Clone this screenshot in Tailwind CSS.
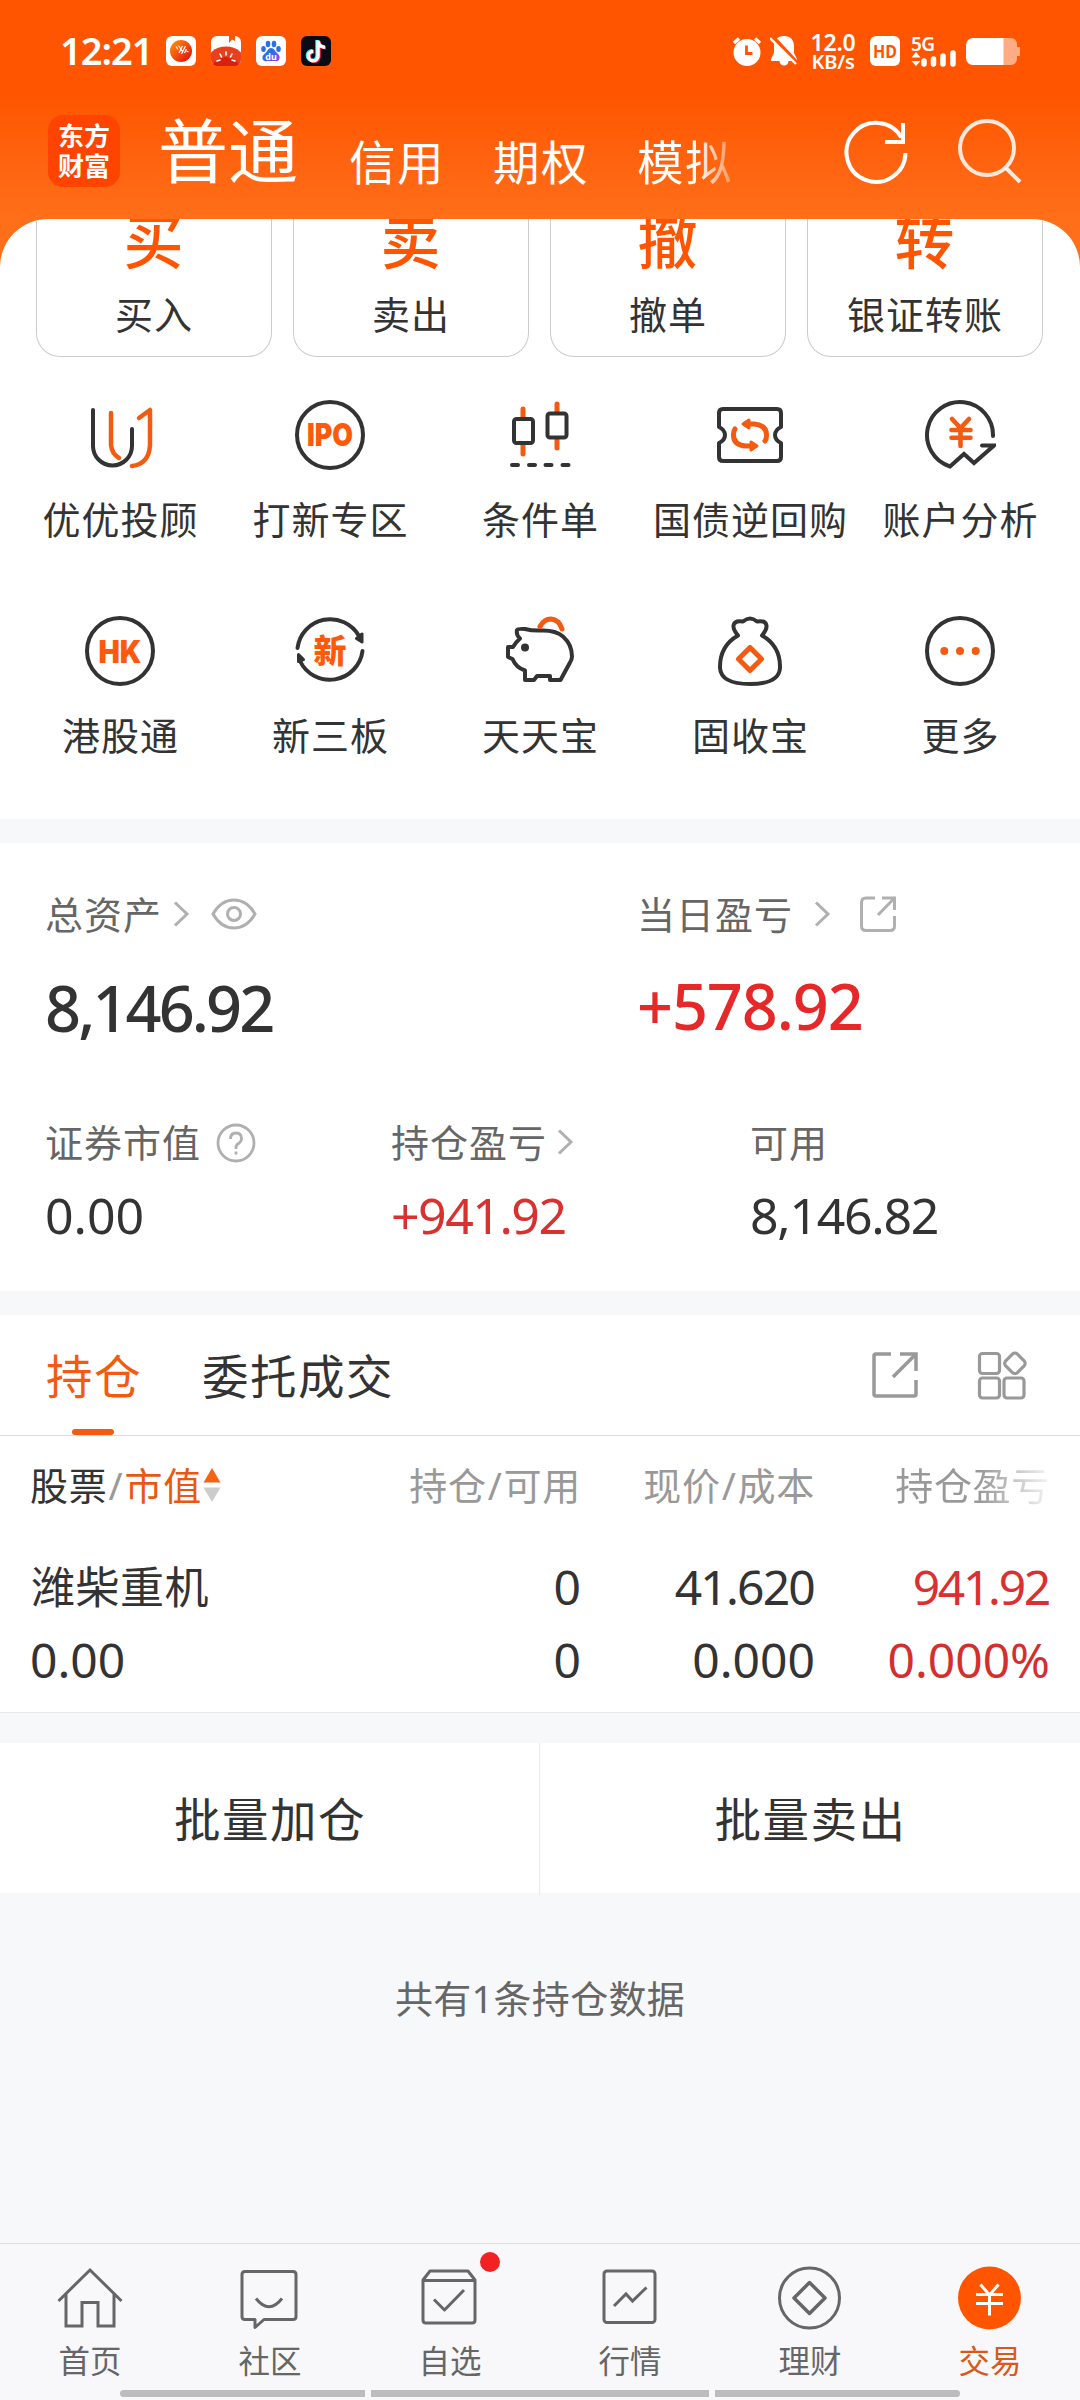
<!DOCTYPE html>
<html lang="zh-CN">
<head>
    <meta charset="UTF-8">
    <meta name="viewport" content="width=device-width, initial-scale=1.0">
    <title>东方财富 - 交易</title>
    <script src="https://cdn.jsdelivr.net/npm/@tailwindcss/browser@4"></script>
    <style>
        body {
            font-family: 'Noto Sans', 'Noto Sans CJK SC', sans-serif;
        }
    </style>
</head>
<body class="w-[1080px] h-[2400px] overflow-hidden bg-[#f7f8fa] text-[#333] flex flex-col">

    <!-- Header -->
    <header class="h-[270px] shrink-0 bg-linear-to-b from-[#ff5500] from-35% to-[#ff6e18] to-80% text-white">
        <!-- Status bar -->
        <div class="h-[102px] pl-[60px] pr-[60px] flex items-center justify-between">
            <div class="flex items-center">
                <span class="w-[106px] pb-[2px] text-[38px] leading-none font-semibold tracking-[-1px]">12:21</span>
                <div class="flex gap-[15px]">
                    <svg class="size-[30px]" viewBox="0 0 30 30">
                        <defs><linearGradient id="g1" x1="0" y1="0" x2="1" y2="1"><stop offset="0" stop-color="#f90"/><stop offset=".6" stop-color="#f04010"/><stop offset="1" stop-color="#d00"/></linearGradient></defs>
                        <rect width="30" height="30" rx="6" fill="#fff"/>
                        <circle cx="15" cy="15" r="11" fill="url(#g1)"/>
                        <path d="M10 10.500l2 3M12.500 9.500l4 6M13 17l3.500-7M15.500 18l4-8M18.500 17l2-4M20.500 15l2 1" stroke="#fff" stroke-width="1.200" fill="none"/>
                    </svg>
                    <svg class="size-[30px]" viewBox="0 0 30 30">
                        <defs><clipPath id="c1"><rect width="30" height="30" rx="6"/></clipPath></defs>
                        <g clip-path="url(#c1)">
                            <rect width="30" height="30" fill="#fff"/>
                            <path d="M18 0h6v5l-3-1.500L18 7z" fill="#ff5500"/>
                            <ellipse cx="15" cy="28" rx="20" ry="17.500" fill="#e8401c"/>
                            <ellipse cx="15" cy="31" rx="13" ry="10" fill="#d8200c"/>
                            <path d="M15 16v3M9 18l1.500 3M21 18l-1.500 3M6 25l3-1M24 25l-3-1" stroke="#fff" stroke-width="1.600" stroke-linecap="round"/>
                        </g>
                    </svg>
                    <svg class="size-[30px]" viewBox="0 0 30 30">
                        <defs><linearGradient id="g2" x1="0" y1="0" x2="1" y2="1"><stop offset=".4" stop-color="#2b70e8"/><stop offset="1" stop-color="#a040e0"/></linearGradient></defs>
                        <rect width="30" height="30" rx="6" fill="#fff"/>
                        <g fill="#2b70e8"><ellipse cx="7.500" cy="13" rx="2.300" ry="3"/><ellipse cx="12" cy="8" rx="2.300" ry="3.200"/><ellipse cx="18" cy="8" rx="2.300" ry="3.200"/><ellipse cx="22.500" cy="13" rx="2.300" ry="3"/></g>
                        <path d="M15 12c3 0 4 3 6 5s3 3 2.500 5.500S21 25.500 19 25H11c-2 .5-4 0-4.500-2.500S7.500 18.500 9.500 17s2.500-5 5.500-5z" fill="url(#g2)"/>
                        <text x="15" y="23.500" font-size="9" font-weight="700" fill="#fff" text-anchor="middle">du</text>
                    </svg>
                    <svg class="size-[30px]" viewBox="0 0 30 30">
                        <rect width="30" height="30" rx="6" fill="#0b0b16"/>
                        <g fill="none" stroke-width="3.400">
                            <path d="M17 4.500V20a4.800 4.800 0 1 1-4.800-4.800M17 5c.5 4 3 6 7 6.300" stroke="#25f4ee" transform="translate(-1 -.6)"/>
                            <path d="M17 4.500V20a4.800 4.800 0 1 1-4.800-4.800M17 5c.5 4 3 6 7 6.300" stroke="#fe2c55" transform="translate(1 .6)"/>
                            <path d="M17 4.500V20a4.800 4.800 0 1 1-4.800-4.800M17 5c.5 4 3 6 7 6.300" stroke="#fff"/>
                        </g>
                    </svg>
                </div>
            </div>
            <div class="flex items-center">
                <svg class="w-[30px] h-[30px]" viewBox="0 0 30 30">
                    <circle cx="15" cy="16.500" r="13.500" fill="#fff"/>
                    <path d="M2 7l5-4.500M28 7l-5-4.500" stroke="#fff" stroke-width="3.400"/>
                    <path d="M14.500 9.500v8h6" stroke="#ff5500" stroke-width="2.800" fill="none"/>
                </svg>
                <svg class="ml-[8px] w-[28px] h-[30px]" viewBox="0 0 28 30">
                    <path d="M14 0c6.500 0 10 4 10 10v7l3 6v2H18.500a4.500 4.500 0 0 1-9 0H1v-2l3-6v-7C4 4 7.500 0 14 0z" fill="#fff"/>
                    <path d="M2 0l26 28" stroke="#ff5500" stroke-width="4"/>
                    <path d="M0 2l26 26" stroke="#fff" stroke-width="2.400"/>
                </svg>
                <div class="ml-[11px] mr-[13px] w-[48px] text-[23px] leading-[20px] font-semibold tracking-[-0.200px] flex flex-col items-center">
                    <span>12.0</span><span class="text-[20px] leading-[19px]">KB/s</span>
                </div>
                <svg class="w-[30px] h-[30px]" viewBox="0 0 30 30">
                    <rect width="30" height="30" rx="6" fill="#fff"/>
                    <text x="15" y="21.500" font-size="18" font-weight="700" fill="#ff5500" text-anchor="middle" textLength="24" lengthAdjust="spacingAndGlyphs">HD</text>
                </svg>
                <svg class="ml-[11px] w-[46px] h-[31px]" viewBox="0 0 46 31">
                    <text x="0" y="14.500" font-size="19" font-weight="600" fill="#fff" textLength="24">5G</text>
                    <path d="M5 16l4.500 5.500H.5zM5 30l4.500-5H.5z" fill="#fff"/>
                    <path d="M13 25v3M22.500 23v5M32 20v8M42 17v11" stroke="#fff" stroke-width="5.500" stroke-linecap="round"/>
                </svg>
                <svg class="ml-[9px] w-[54px] h-[27px]" viewBox="0 0 54 27">
                    <path d="M37 0h8a6 6 0 0 1 6 6v3h3v9h-3v3a6 6 0 0 1-6 6h-8z" fill="#ffab84"/>
                    <path d="M37.500 0H7a7 7 0 0 0-7 7v13a7 7 0 0 0 7 7h30.500z" fill="#fff"/>
                </svg>
            </div>
        </div>
        <!-- Account tabs -->
        <div class="pl-[48px] pr-[58px] flex">
            <div class="mt-[13px] size-[72px] rounded-[15px] bg-[#ff4400] flex flex-col items-center justify-center text-[26px] leading-[30px] font-bold">
                <span>东方</span><span>财富</span>
            </div>
            <nav class="ml-[38px] pt-[1px] h-[100px] flex items-baseline whitespace-nowrap">
                <span class="w-[191px] text-[70px] leading-[96px]">普通</span>
                <span class="w-[144px] pt-[2px] text-[46.500px] tracking-[1.500px] translate-y-[2px]">信用</span>
                <span class="w-[144px] text-[46.500px] tracking-[1.500px] translate-y-[2px]">期权</span>
                <span class="text-[46.500px] tracking-[1.500px] translate-y-[2px] bg-linear-to-r from-white from-60% to-white/30 bg-clip-text text-transparent">模拟</span>
            </nav>
            <svg class="ml-auto mt-[17px] w-[66px] h-[66px]" viewBox="0 0 66 66" fill="none" stroke="#fff" stroke-width="4">
                <path d="M61.500 34a29.500 29.500 0 1 1-4-15.500"/>
                <path d="M59 4v19H41"/>
            </svg>
            <svg class="ml-[48px] mt-[17px] w-[64px] h-[66px]" viewBox="0 0 64 66" fill="none" stroke="#fff" stroke-opacity=".85" stroke-width="4">
                <circle cx="29" cy="29" r="27"/>
                <path d="M48 49l14 14"/>
            </svg>
        </div>
    </header>

    <!-- Shortcuts -->
    <section class="-mt-[51px] h-[600px] shrink-0 rounded-t-[48px] bg-white overflow-hidden">
        <div class="pl-[36px] pr-[37px] grid grid-cols-4 gap-[21px] text-center">
            <div class="h-[138px] border border-t-0 border-[#ccc] rounded-b-[24px]">
                <div class="-mt-[8px] mr-[1px] h-[60px] text-[60px] leading-[60px] font-medium text-[#ff5500]">买</div>
                <div class="mt-[18px] text-[38px] leading-[50px] tracking-[1px]">买入</div>
            </div>
            <div class="h-[138px] border border-t-0 border-[#ccc] rounded-b-[24px]">
                <div class="-mt-[8px] mr-[1px] h-[60px] text-[60px] leading-[60px] font-medium text-[#ff5500]">卖</div>
                <div class="mt-[18px] text-[38px] leading-[50px] tracking-[1px]">卖出</div>
            </div>
            <div class="h-[138px] border border-t-0 border-[#ccc] rounded-b-[24px]">
                <div class="-mt-[8px] mr-[1px] h-[60px] text-[60px] leading-[60px] font-medium text-[#ff5500]">撤</div>
                <div class="mt-[18px] text-[38px] leading-[50px] tracking-[1px]">撤单</div>
            </div>
            <div class="h-[138px] border border-t-0 border-[#ccc] rounded-b-[24px]">
                <div class="-mt-[8px] mr-[1px] h-[60px] text-[60px] leading-[60px] font-medium text-[#ff5500]">转</div>
                <div class="mt-[18px] text-[38px] leading-[50px] tracking-[1px]">银证转账</div>
            </div>
        </div>
        <div class="mt-[42px] px-[15px] grid grid-cols-5 auto-rows-[216px] text-[38px] leading-[50px] tracking-[1px] whitespace-nowrap">
            <div class="flex flex-col items-center gap-[23px]">
                <svg class="size-[72px]" viewBox="0 0 72 72" fill="none" stroke-width="4" stroke-linecap="round">
                    <path d="M9 11V47a19.500 19.500 0 0 0 39 0V30" stroke="#333"/>
                    <path d="M27 14V46q1 9 8 13M55 19l11-8V46q-1 19-18 21" stroke="#f45a10" stroke-width="4.500" stroke-linejoin="round"/>
                </svg>
                <span class="pl-[1px]">优优投顾</span>
            </div>
            <div class="flex flex-col items-center gap-[23px]">
                <svg class="size-[72px]" viewBox="0 0 72 72">
                    <circle cx="36" cy="36" r="33" fill="none" stroke="#333" stroke-width="4"/>
                    <text x="36" y="47" font-size="31" font-weight="900" fill="#ff5a0c" text-anchor="middle" textLength="46" lengthAdjust="spacingAndGlyphs" letter-spacing="0" font-family="Inter">IPO</text>
                </svg>
                <span class="pl-[1px]">打新专区</span>
            </div>
            <div class="flex flex-col items-center gap-[23px]">
                <svg class="size-[72px]" viewBox="0 0 72 72" fill="none" stroke-width="4" stroke-linecap="round">
                    <path d="M19 10v9M19 46v9M53 5v8M53 41v8" stroke="#f45a10" stroke-width="5"/>
                    <rect x="10" y="20" width="19" height="24" rx="2.500" stroke="#333"/>
                    <rect x="43.500" y="14.500" width="19" height="24" rx="2.500" stroke="#333"/>
                    <path d="M8 66h6M25 66h6M41.500 66h6M58.500 66h6" stroke="#333"/>
                </svg>
                <span class="pl-[1px]">条件单</span>
            </div>
            <div class="flex flex-col items-center gap-[23px]">
                <svg class="size-[72px]" viewBox="0 0 72 72" fill="none" stroke="#333" stroke-width="4" stroke-linejoin="round">
                    <path d="M9 10h54q4 0 4 4v14q-6 3-6 8t6 8v14q0 4-4 4H9q-4 0-4-4V44q6-3 6-8t-6-8V14q0-4 4-4z"/>
                    <g stroke="#f45a10" stroke-width="5" stroke-linecap="round">
                        <path d="M35 25h5q13 1 12.500 12 0 3-1.500 5M37 47h-5q-13-1-12.500-12 0-3 1.500-5"/>
                        <path d="M35 21v8l-6-4zM37 43v8l6-4z" fill="#f45a10" stroke-width="3"/>
                    </g>
                </svg>
                <span class="pl-[1px]">国债逆回购</span>
            </div>
            <div class="flex flex-col items-center gap-[23px]">
                <svg class="size-[72px]" viewBox="0 0 72 72" fill="none" stroke="#333" stroke-width="4" stroke-linecap="round">
                    <path d="M69 37A33 33 0 1 0 26 67.500L40 55l10 9 20-17.500H58"/>
                    <path d="M28 20l8.500 9 8.500-9M36.500 29v18M27.500 31h19M27.500 38.700h19" stroke="#f45a10" stroke-width="4.600"/>
                </svg>
                <span class="pl-[1px]">账户分析</span>
            </div>
            <div class="flex flex-col items-center gap-[23px]">
                <svg class="size-[72px]" viewBox="0 0 72 72">
                    <circle cx="36" cy="36" r="33" fill="none" stroke="#333" stroke-width="4"/>
                    <text x="36" y="47.500" font-size="32" font-weight="900" fill="#ff5a0c" text-anchor="middle" textLength="43" lengthAdjust="spacingAndGlyphs" letter-spacing="0" font-family="Inter">HK</text>
                </svg>
                <span class="pl-[1px]">港股通</span>
            </div>
            <div class="flex flex-col items-center gap-[23px]">
                <svg class="size-[72px]" viewBox="0 0 72 72" fill="none" stroke="#333" stroke-width="4" stroke-linecap="round">
                    <path d="M3.500 33A33 33 0 0 1 65 21M68.500 36A33 33 0 0 1 6 46"/>
                    <path d="M68 19v8l-5.500-3.500zM4.500 39.500v7l5-2z" fill="#333" stroke-width="3" stroke-linejoin="round"/>
                    <text x="36" y="47.500" font-size="33" font-weight="900" fill="#ff5a0c" stroke="none" text-anchor="middle" letter-spacing="0">新</text>
                </svg>
                <span class="pl-[1px]">新三板</span>
            </div>
            <div class="flex flex-col items-center gap-[23px]">
                <svg class="size-[72px]" viewBox="0 0 72 72" fill="none" stroke="#333" stroke-width="4" stroke-linejoin="round">
                    <path d="M13 15q1-1.500 8-1 7 2 18 1.500 13 0 20 6 9 8 9 20 0 3-2 6L56.500 65H46v-4H33l-3 4h-9v-9.500q-9-3-12.500-11.500L4 42V32h5q3-5 7-8.500Q12 20 13 15z"/>
                    <path d="M36 11.500Q40 4 47 4q8 .5 11 10" stroke="#f45a10" stroke-width="5" stroke-linecap="round"/>
                    <circle cx="21" cy="32.500" r="4" fill="#333" stroke="none"/>
                </svg>
                <span class="pl-[1px]">天天宝</span>
            </div>
            <div class="flex flex-col items-center gap-[23px]">
                <svg class="size-[72px]" viewBox="0 0 72 72" fill="none" stroke="#333" stroke-width="4" stroke-linejoin="round" stroke-linecap="round">
                    <path d="M24 20.500q-5-6-4.500-10Q20.500 5 29 6.500q7-6 14 0 8.500-1.500 9.500 4 .5 4-4.500 10Q66.500 31 66 53q-1 16-30 16T6 53Q5.500 31 24 20.500z"/>
                    <path d="M36 32.500l11.500 11.500L36 55.500 24.500 44z" stroke="#f45a10" stroke-width="5"/>
                </svg>
                <span class="pl-[1px]">固收宝</span>
            </div>
            <div class="flex flex-col items-center gap-[23px]">
                <svg class="size-[72px]" viewBox="0 0 72 72">
                    <circle cx="36" cy="36" r="33" fill="none" stroke="#333" stroke-width="4"/>
                    <g fill="#f45a10"><circle cx="20.300" cy="36" r="4"/><circle cx="36" cy="36" r="4"/><circle cx="51.700" cy="36" r="4"/></g>
                </svg>
                <span class="pl-[1px]">更多</span>
            </div>
        </div>
    </section>

    <!-- Assets -->
    <section class="mt-[24px] h-[448px] shrink-0 bg-white pl-[45px] text-[38px] text-[#666]">
        <div class="pt-[46px] flex">
            <div class="w-[592px]">
                <div class="h-[50px] flex items-center">
                    <span class="tracking-[1px]">总资产</span>
                    <svg class="ml-[10px] w-[18px] h-[26px]" viewBox="0 0 18 26" fill="none" stroke="#b0b0b0" stroke-width="3"><path d="M3 1.500l12 11.500L3 24.500"/></svg>
                    <svg class="ml-[21px] w-[46px] h-[32px]" viewBox="0 0 46 32" fill="none" stroke="#b0b0b0" stroke-width="3"><path d="M2 16Q10 2 23 2t21 14Q36 30 23 30T2 16z"/><circle cx="23" cy="16" r="6.500"/></svg>
                </div>
                <div class="mt-[29px] text-[63px] leading-[80px] font-medium tracking-[-2.900px] text-[#333]">8,146.92</div>
            </div>
            <div>
                <div class="h-[50px] flex items-center">
                    <span class="tracking-[1px]">当日盈亏</span>
                    <svg class="ml-[20px] w-[18px] h-[26px]" viewBox="0 0 18 26" fill="none" stroke="#b0b0b0" stroke-width="3"><path d="M3 1.500l12 11.500L3 24.500"/></svg>
                    <svg class="ml-[28px] w-[38px] h-[38px]" viewBox="0 0 38 38" fill="none" stroke="#b0b0b0" stroke-width="3"><path d="M16 3H7q-4.500 0-4.500 4.500V31Q2.500 35.500 7 35.500h24q4.500 0 4.500-4.500V21M23 3h12.500v12M35.500 3L19 20"/></svg>
                </div>
                <div class="mt-[27px] text-[63px] leading-[80px] font-medium tracking-[-1.100px] text-[#e62828]">+578.92</div>
            </div>
        </div>
        <div class="mt-[69px] flex">
            <div class="w-[346px]">
                <div class="h-[50px] flex items-center">
                    <span class="tracking-[1px]">证券市值</span>
                    <svg class="ml-[15px] mt-[1px] w-[40px] h-[40px]" viewBox="0 0 40 40" fill="none" stroke="#b0b0b0" stroke-width="2.800"><circle cx="20" cy="20" r="18"/><path d="M14.500 16q0-6 5.500-6t5.500 5.500q0 3-3 5T20 25v1M20 28.500v3"/></svg>
                </div>
                <div class="mt-[18px] text-[50px] leading-[60px] text-[#333]">0.00</div>
            </div>
            <div class="w-[359px]">
                <div class="h-[50px] flex items-center">
                    <span class="tracking-[1px]">持仓盈亏</span>
                    <svg class="ml-[9px] w-[18px] h-[26px]" viewBox="0 0 18 26" fill="none" stroke="#b0b0b0" stroke-width="3"><path d="M3 1.500l12 11.500L3 24.500"/></svg>
                </div>
                <div class="mt-[18px] text-[50px] leading-[60px] tracking-[-1.500px] text-[#d93030]">+941.92</div>
            </div>
            <div>
                <div class="h-[50px] flex items-center"><span class="tracking-[1px]">可用</span></div>
                <div class="mt-[18px] text-[50px] leading-[60px] tracking-[-1.300px] text-[#333]">8,146.82</div>
            </div>
        </div>
    </section>

    <!-- Positions -->
    <section class="mt-[24px] h-[398px] shrink-0 bg-white border-b border-[#e8e9eb]">
        <div class="h-[121px] pl-[46px] pr-[53px] border-b border-[#ddd] flex text-[46.500px] tracking-[1.500px]">
            <div class="w-[96px] flex flex-col items-center justify-between">
                <span class="mt-[27px] leading-[68px] text-[#f45a10]">持仓</span>
                <span class="mr-[3px] w-[42px] h-[6px] rounded-full bg-[#f45a10]"></span>
            </div>
            <span class="ml-[60px] mt-[27px] leading-[68px]">委托成交</span>
            <svg class="ml-auto mt-[36px] size-[48px]" viewBox="0 0 48 48" fill="none" stroke="#999" stroke-width="3.500"><path d="M20 3H5q-2 0-2 2v38q0 2 2 2h38q2 0 2-2V29M29 3h16v17M45 3L22 26"/></svg>
            <svg class="ml-[58px] mt-[36px] size-[50px]" viewBox="0 0 50 50" fill="none" stroke="#999" stroke-width="3.200"><rect x="2.500" y="2.500" width="20" height="20" rx="3"/><rect x="2.500" y="27" width="20" height="20" rx="3"/><rect x="27" y="27" width="20" height="20" rx="3"/><rect x="29.500" y="4" width="16.500" height="16.500" rx="3.500" transform="rotate(45 37.750 12.500)"/></svg>
        </div>
        <div class="pl-[30px] pr-[30px] grid grid-cols-[302px_249px_234px_235px] text-right text-[#999]">
            <div class="h-[98px] flex items-center text-[38px] tracking-[0.800px]">
                <span class="text-[#333]">股票</span><span class="mx-[1px]">/</span><span class="text-[#e8590f]">市值</span>
                <svg class="ml-[1px] w-[18px] h-[36px]" viewBox="0 0 18 36"><path d="M9 1l8.500 14.500H.5z" fill="#f46414"/><path d="M9 35l8.500-14.500H.5z" fill="#ccc"/></svg>
            </div>
            <div class="text-[38px] leading-[98px] tracking-[0.700px]">持仓<span class="mx-[1px]">/</span>可用</div>
            <div class="text-[38px] leading-[98px] tracking-[0.700px]">现价<span class="mx-[1px]">/</span>成本</div>
            <div class="text-[38px] leading-[98px] tracking-[0.700px]"><span class="bg-linear-to-r from-[#999] from-55% to-[#999]/10 bg-clip-text text-transparent">持仓盈亏</span></div>
        </div>
        <div class="pt-[16px] pl-[30px] pr-[30px] grid grid-cols-[302px_249px_234px_235px] text-right text-[48px] leading-[73px]">
            <div class="pl-[1px] pt-[1px] text-left text-[44px] leading-[72px] tracking-[0.500px]">潍柴重机</div>
            <div>0</div>
            <div class="tracking-[-1.800px] pr-[1px]">41.620</div>
            <div class="tracking-[-2.300px] pr-[1px] text-[#dc2f2f]">941.92</div>
            <div class="text-left">0.00</div>
            <div>0</div>
            <div>0.000</div>
            <div class="text-[#d42f2f]">0.000%</div>
        </div>
    </section>

    <!-- Batch actions -->
    <div class="mt-[30px] h-[150px] shrink-0 bg-white grid grid-cols-2 divide-x divide-[#e8e9eb] text-center text-[46.500px] leading-[152px] tracking-[1.500px]">
        <div class="pl-[1px]">批量加仓</div>
        <div class="pl-[1px]">批量卖出</div>
    </div>
    <p class="mt-[75px] text-center text-[38px] leading-[60px] tracking-[0.300px] text-[#666]">共有1条持仓数据</p>

    <!-- Tab bar -->
    <nav class="mt-auto h-[157px] border-t border-[#dedede] bg-[#f8f8fb] relative">
        <div class="pt-[20px] grid grid-cols-6 text-[31.500px] leading-[44px] text-[#666] text-center">
            <div class="flex flex-col items-center gap-[7px]">
                <svg class="size-[68px]" viewBox="0 0 68 68" fill="none" stroke="#666" stroke-width="3"><path d="M2.500 37L34 6l31.500 31M10 30v32h16V38.500h16V62h16V30"/></svg>
                <span>首页</span>
            </div>
            <div class="flex flex-col items-center gap-[7px]">
                <svg class="size-[68px]" viewBox="0 0 68 68" fill="none" stroke="#666" stroke-width="3" stroke-linejoin="round"><path d="M9 7.500h48q3 0 3 3v42q0 3-3 3H28l-9 8v-8H9q-3 0-3-3v-42q0-3 3-3z"/><path d="M20 34.500q13 16.500 26 0"/></svg>
                <span>社区</span>
            </div>
            <div class="flex flex-col items-center gap-[7px] relative">
                <svg class="size-[68px]" viewBox="0 0 68 68" fill="none" stroke="#666" stroke-width="3" stroke-linejoin="round"><path d="M7 16v40q0 3 3 3h46q3 0 3-3V16l-7-9H14zM7 16.500h52M18 35.500L28.500 46 48 26"/></svg>
                <span>自选</span>
                <i class="absolute left-[120px] -top-[12px] size-[20px] rounded-full bg-[#f22222]"></i>
            </div>
            <div class="flex flex-col items-center gap-[7px]">
                <svg class="size-[68px]" viewBox="0 0 68 68" fill="none" stroke="#666" stroke-width="3"><rect x="8" y="7" width="51" height="51.500" rx="3"/><path d="M18 42l12-12 6.500 7L50.500 23.500"/></svg>
                <span>行情</span>
            </div>
            <div class="flex flex-col items-center gap-[7px]">
                <svg class="size-[68px]" viewBox="0 0 68 68" fill="none" stroke="#666" stroke-width="3"><circle cx="33.500" cy="34" r="30"/><path d="M33.500 18.500L49 34 33.500 49.500 18 34z" stroke-linejoin="round" stroke-width="3.500"/></svg>
                <span>理财</span>
            </div>
            <div class="flex flex-col items-center gap-[7px] text-[#d9591a]">
                <svg class="size-[68px]" viewBox="0 0 68 68" fill="none" stroke="#fff" stroke-width="3"><circle cx="33.500" cy="34" r="31.500" fill="#ff5500" stroke="none"/><path d="M24.500 20.500L33.500 31l9-10.500M33.500 31v20.500M20 30.500h27M20 39.500h27"/></svg>
                <span>交易</span>
            </div>
        </div>
        <div class="absolute inset-x-[120px] bottom-[3px] h-[7px] flex gap-[6px]">
            <span class="w-[245px] rounded-l-full bg-[#bcbcbc]"></span>
            <span class="flex-1 bg-[#bcbcbc]"></span>
            <span class="w-[245px] rounded-r-full bg-[#bcbcbc]"></span>
        </div>
    </nav>

</body>
</html>
